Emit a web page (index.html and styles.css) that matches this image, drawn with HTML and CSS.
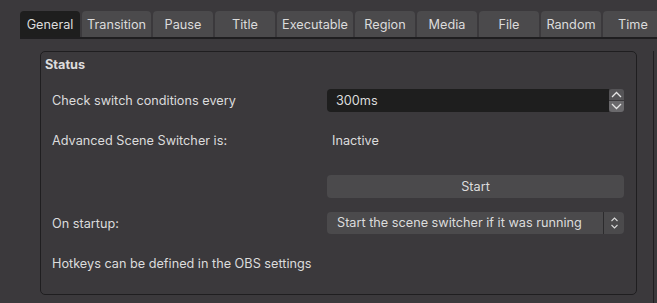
FILE: index.html
```html
<!DOCTYPE html>
<html lang="en">
<head>
    <meta charset="UTF-8">
    <title>Advanced Scene Switcher</title>
    <link rel="stylesheet" href="styles.css">
</head>
<body>

    <!-- Tab bar -->
    <div class="tabs">
        <div class="tab active">General</div>
        <div class="tab tab-transition">Transition</div>
        <div class="tab">Pause</div>
        <div class="tab">Title</div>
        <div class="tab tab-executable">Executable</div>
        <div class="tab">Region</div>
        <div class="tab">Media</div>
        <div class="tab">File</div>
        <div class="tab">Random</div>
        <div class="tab">Time</div>
    </div>

    <div class="pane">
        <!-- Status group -->
        <div class="group">
            <div class="group-title">Status</div>
            <div class="form">
                <div class="label">Check switch conditions every</div>
                <div class="spinbox">
                    <span class="spin-value">300ms</span>
                    <div class="spin-buttons">
                        <div class="spin-btn up">
                            <svg width="11" height="7" viewBox="0 0 11 7"><path d="M1 6 L5.5 1.5 L10 6" fill="none" stroke="#e6e6e6" stroke-width="1.3"/></svg>
                        </div>
                        <div class="spin-btn down">
                            <svg width="11" height="7" viewBox="0 0 11 7"><path d="M1 1 L5.5 5.5 L10 1" fill="none" stroke="#e6e6e6" stroke-width="1.3"/></svg>
                        </div>
                    </div>
                </div>

                <div class="label">Advanced Scene Switcher is:</div>
                <div class="value">Inactive</div>

                <div></div>
                <button class="push">Start</button>

                <div class="label">On startup:</div>
                <div class="combo">
                    <span class="combo-text">Start the scene switcher if it was running</span>
                    <span class="combo-arrows">
                        <svg width="9" height="14" viewBox="0 0 9 14"><path d="M1.5 5 L4.5 2 L7.5 5 M1.5 9 L4.5 12 L7.5 9" fill="none" stroke="#d8d8d8" stroke-width="1.1"/></svg>
                    </span>
                </div>

                <div class="label wide">Hotkeys can be defined in the OBS settings</div>
            </div>
        </div>
        <div class="side"></div>
    </div>

</body>
</html>
```

FILE: styles.css
```css
body {
    margin: 0;
    background-color: #3b393c;
    color: #dcdcdc;
    font-family: 'Inter', 'Liberation Sans', sans-serif;
    font-size: 12.7px;
    height: 303px;
    overflow: hidden;
}

/* Tabs */
.tabs {
    display: flex;
    gap: 2px;
    margin: 11px 0 0 20px;
    border-bottom: 2px solid #1f1e20;
}

.tab {
    width: 60px;
    flex-shrink: 0;
    height: 26px;
    padding-top: 1px;
    box-sizing: border-box;
    display: flex;
    align-items: center;
    justify-content: center;
    background-color: #4b4a4c;
    border-radius: 4px 4px 0 0;
    white-space: nowrap;
}

.tab.active {
    background-color: #1e1e1e;
}

.tab-transition {
    width: 69px;
}

.tab-executable {
    width: 76px;
}

/* Pane below tabs */
.pane {
    display: flex;
    margin-top: 12px;
    padding-left: 40px;
    height: 260px;
}

.group {
    width: 597px;
    height: 244px;
    box-sizing: border-box;
    border: 1px solid #1f1e20;
    border-radius: 5px;
}

.side {
    margin-left: 16px;
    border-left: 1px solid #1f1e20;
}

.group-title {
    font-weight: bold;
    padding: 4px 0 0 4px;
    height: 24px;
    line-height: 17px;
}

/* Form layout */
.form {
    display: grid;
    grid-template-columns: 275px 297px;
    grid-template-rows: 40px 40px 52px 22px 58px;
    align-items: center;
    padding-left: 11px;
}

.label.wide {
    grid-column: 1 / 3;
}

.value {
    padding-left: 5px;
}

/* Spin box */
.spinbox {
    display: flex;
    height: 23px;
}

.spin-value {
    flex: 1;
    background-color: #1e1e1e;
    border-radius: 4px 0 0 4px;
    padding-left: 9px;
    line-height: 23px;
}

.spin-buttons {
    width: 15px;
    display: flex;
    flex-direction: column;
    gap: 1px;
}

.spin-btn {
    flex: 1;
    display: flex;
    align-items: center;
    justify-content: center;
}

.spin-btn.up {
    background-color: #555457;
    border-radius: 3px 3px 0 0;
}

.spin-btn.down {
    background-color: #6a696c;
    border-radius: 0 0 3px 3px;
}

/* Push button */
.push {
    height: 23px;
    border: none;
    border-radius: 4px;
    background-color: #4b4a4c;
    color: #dcdcdc;
    font-family: inherit;
    font-size: 12.7px;
    padding: 0;
}

/* Combo box */
.combo {
    display: flex;
    height: 22px;
    background-color: #4b4a4c;
    border-radius: 4px;
}

.combo-text {
    flex: 1;
    padding-left: 10px;
    line-height: 22px;
    white-space: nowrap;
}

.combo-arrows {
    width: 20px;
    border-left: 1px solid #2c2b2d;
    display: flex;
    align-items: center;
    justify-content: center;
}
```
